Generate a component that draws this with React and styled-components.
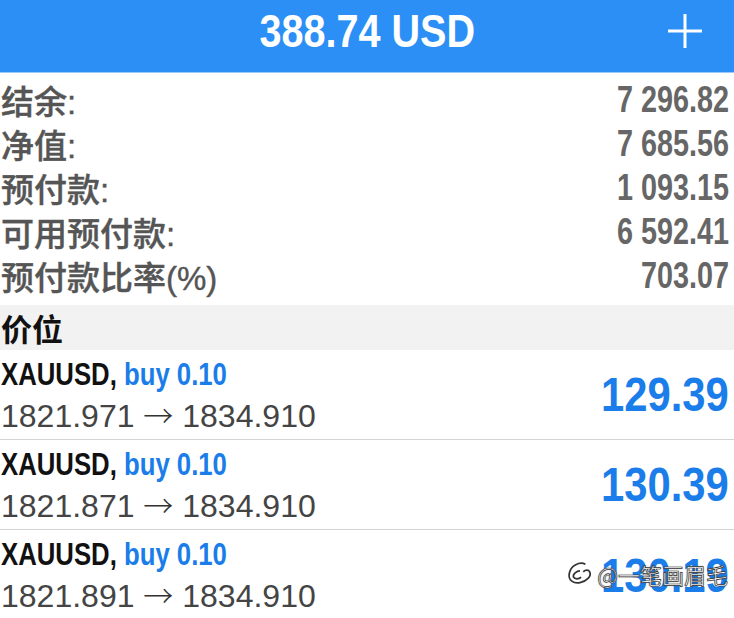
import styled, { createGlobalStyle } from "styled-components";

const GlobalStyle = createGlobalStyle`
  html, body {
    margin: 0;
    padding: 0;
    background: #ffffff;
  }
  body {
    font-family: "Liberation Sans", Arial, "Noto Sans CJK SC", sans-serif;
    overflow: hidden;
  }
`;

const SANS = `"Liberation Sans", Arial, "Noto Sans CJK SC", sans-serif`;

// the app uses a condensed bold face; squeeze Liberation Sans Bold to match
const Condensed = styled.span`
  display: inline-block;
  white-space: nowrap;
  font-family: ${SANS};
  font-weight: 700;
  transform: scaleX(${(p) => p.$sx || 0.82});
  transform-origin: ${(p) => p.$origin || "left"} center;
`;

const Page = styled.div`
  position: relative;
  width: 734px;
  height: 618px;
  overflow: hidden;
`;

const Header = styled.header`
  height: 73px;
  box-sizing: border-box;
  padding-bottom: 10px;
  background: #2b8ff5;
  display: grid;
  grid-template-columns: 1fr auto 1fr;
  align-items: center;
  border-bottom: 1px solid #9cc8f5;
`;

const Title = styled.h1`
  grid-column: 2;
  margin: 0;
  color: #fff;
  font-size: 46px;
  font-weight: 700;
  line-height: 50px;
`;

const AddButton = styled.button`
  justify-self: end;
  margin-right: 30px;
  width: 38px;
  height: 38px;
  padding: 0;
  border: 0;
  background: none;
  display: flex;
  align-items: center;
  justify-content: center;
`;

const Summary = styled.section`
  padding: 5px 0 7px;
`;

const SummaryRow = styled.div`
  height: 44px;
  display: flex;
  align-items: center;
  justify-content: space-between;
  padding: 0 5px 0 1px;
`;

const Label = styled.span`
  font-family: ${SANS};
  font-size: 33px;
  font-weight: 500;
  color: #555;
  -webkit-text-stroke: 0.4px #555;
`;

const Value = styled(Condensed)`
  font-size: 36px;
  color: #666;
`;

const SectionHead = styled.div`
  height: 45px;
  background: #f2f2f2;
  display: flex;
  align-items: center;
  padding-left: 1px;
  font-family: ${SANS};
  font-size: 31px;
  font-weight: 700;
  color: #111;
`;

const Position = styled.div`
  height: 90px;
  display: flex;
  align-items: center;
  justify-content: space-between;
  padding: 0 5px 0 1px;
  border-bottom: ${(p) => (p.$last ? "none" : "1px solid #d4d4d4")};
  box-sizing: border-box;
`;

const PosInfo = styled.div`
  display: flex;
  flex-direction: column;
  gap: 2px;
  padding-top: 2px;
`;

const Symbol = styled(Condensed)`
  font-size: 31px;
  color: #111;
  line-height: 36px;
`;

const Side = styled.span`
  color: #1b7de9;
`;

const Prices = styled.div`
  font-family: ${SANS};
  font-size: 32px;
  color: #444;
  line-height: 38px;
  white-space: nowrap;
`;

const Arrow = styled.span`
  font-family: "Noto Sans CJK SC", sans-serif;
  font-weight: 300;
  font-size: 30px;
  color: #333;
`;

const Profit = styled(Condensed)`
  font-size: 48px;
  color: #1b7de9;
`;

const Watermark = styled.div`
  position: absolute;
  right: 6px;
  bottom: 30px;
  display: flex;
  align-items: center;
  gap: 3px;
  font-family: "Noto Sans CJK SC", sans-serif;
  font-size: 22px;
  line-height: 26px;
  color: #fff;
  -webkit-text-stroke: 0.7px #333;
  text-shadow: 0 0 2px rgba(0, 0, 0, 0.35);
`;

const summary = [
  ["结余:", "7 296.82"],
  ["净值:", "7 685.56"],
  ["预付款:", "1 093.15"],
  ["可用预付款:", "6 592.41"],
  ["预付款比率(%)", "703.07"],
];

const positions = [
  { open: "1821.971", close: "1834.910", profit: "129.39" },
  { open: "1821.871", close: "1834.910", profit: "130.39" },
  { open: "1821.891", close: "1834.910", profit: "130.19" },
];

export default function App() {
  return (
    <Page>
      <GlobalStyle />
      <Header>
        <Title>
          <Condensed $sx={0.86} $origin="center">
            388.74 USD
          </Condensed>
        </Title>
        <AddButton aria-label="add">
          <svg width="36" height="36" viewBox="0 0 36 36">
            <path d="M18 1v34M1 18h34" stroke="#fff" strokeWidth="3" />
          </svg>
        </AddButton>
      </Header>
      <Summary>
        {summary.map(([label, value]) => (
          <SummaryRow key={label}>
            <Label>{label}</Label>
            <Value $sx={0.8} $origin="right">
              {value}
            </Value>
          </SummaryRow>
        ))}
      </Summary>
      <SectionHead>价位</SectionHead>
      {positions.map((p, i) => (
        <Position key={i} $last={i === positions.length - 1}>
          <PosInfo>
            <div>
              <Symbol $sx={0.83}>
                XAUUSD, <Side>buy 0.10</Side>
              </Symbol>
            </div>
            <Prices>
              {p.open} <Arrow>→</Arrow> {p.close}
            </Prices>
          </PosInfo>
          <Profit $sx={0.87} $origin="right">
            {p.profit}
          </Profit>
        </Position>
      ))}
      <Watermark>
        <svg width="28" height="28" viewBox="0 0 26 26">
          <path
            d="M18 4c-5-3-14 1-15 9-1 6 4 9 10 8 6-1 11-6 9-10-1-2-4-2-6 0M13 10c-3 0-7 3-6 6 1 2 5 2 7 0"
            fill="none"
            stroke="#333"
            strokeWidth="1.6"
          />
        </svg>
        <span>@一笔画眉毛</span>
      </Watermark>
    </Page>
  );
}
